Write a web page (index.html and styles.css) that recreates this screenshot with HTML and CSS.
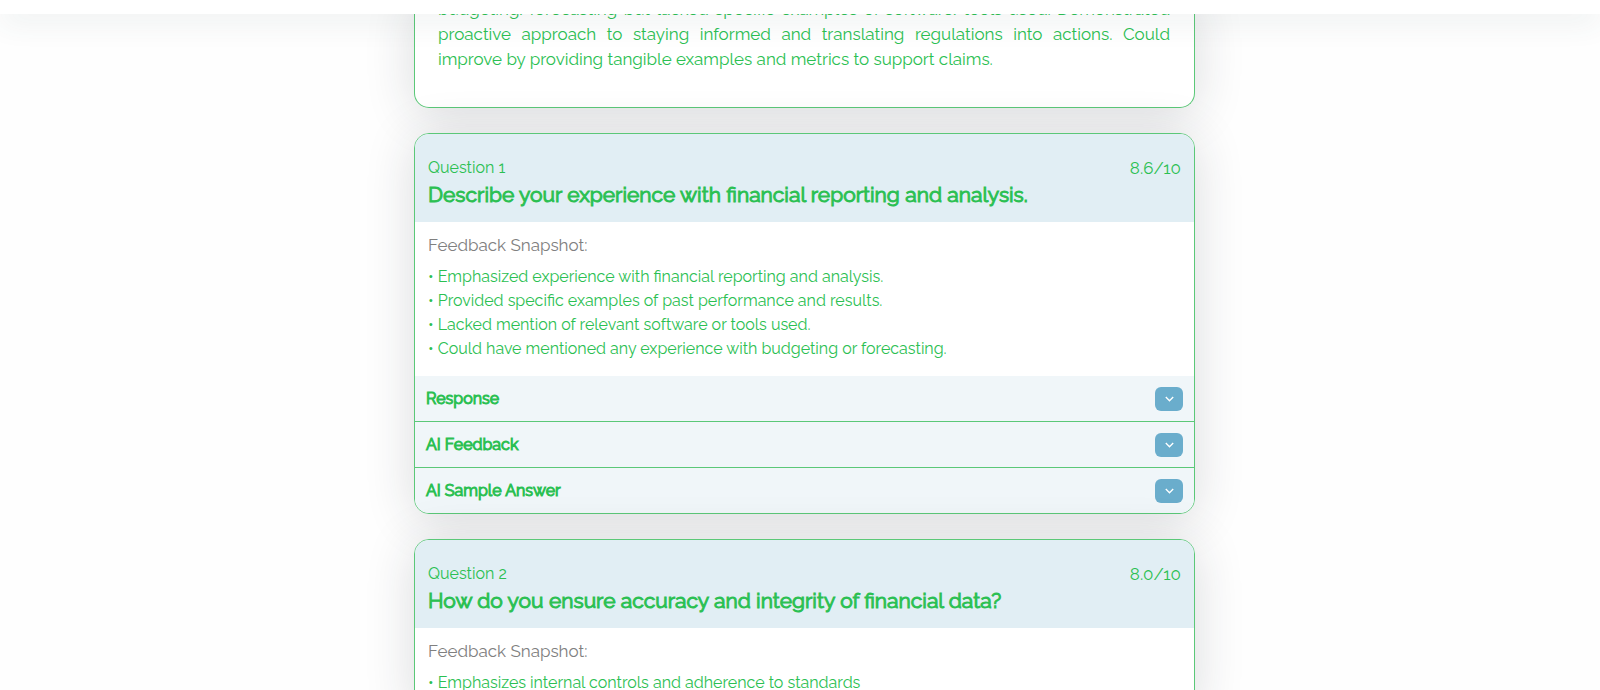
FILE: index.html
```html
<!DOCTYPE html>
<html lang="en">
<head>
<meta charset="utf-8">
<title>Interview feedback</title>
<link rel="stylesheet" href="styles.css">
</head>
<body>
<header class="topbar"></header>
<main class="results">
  <section class="card summary">
    <p class="summary-text">budgeting/forecasting but lacked specific examples of software/tools used. Demonstrated proactive approach to staying informed and translating regulations into actions. Could improve by providing tangible examples and metrics to support claims.</p>
  </section>

  <article class="card">
    <header class="card-head">
      <div class="card-meta"><span class="number">Question 1</span><span class="score">8.6/10</span></div>
      <h2 class="question">Describe your experience with financial reporting and analysis.</h2>
    </header>
    <div class="snapshot">
      <h3 class="snapshot-title">Feedback Snapshot:</h3>
      <ul class="points">
        <li>Emphasized experience with financial reporting and analysis.</li>
        <li>Provided specific examples of past performance and results.</li>
        <li>Lacked mention of relevant software or tools used.</li>
        <li>Could have mentioned any experience with budgeting or forecasting.</li>
      </ul>
    </div>
    <div class="row"><span id="r1">Response</span><button class="toggle" type="button" aria-labelledby="r1"><svg class="chevron" viewBox="0 0 8 5"><path d="M0.7 0.7 4 4 7.3 0.7"/></svg></button></div>
    <div class="row"><span id="r2">AI Feedback</span><button class="toggle" type="button" aria-labelledby="r2"><svg class="chevron" viewBox="0 0 8 5"><path d="M0.7 0.7 4 4 7.3 0.7"/></svg></button></div>
    <div class="row"><span id="r3">AI Sample Answer</span><button class="toggle" type="button" aria-labelledby="r3"><svg class="chevron" viewBox="0 0 8 5"><path d="M0.7 0.7 4 4 7.3 0.7"/></svg></button></div>
  </article>

  <article class="card">
    <header class="card-head">
      <div class="card-meta"><span class="number">Question 2</span><span class="score">8.0/10</span></div>
      <h2 class="question">How do you ensure accuracy and integrity of financial data?</h2>
    </header>
    <div class="snapshot">
      <h3 class="snapshot-title">Feedback Snapshot:</h3>
      <ul class="points">
        <li>Emphasizes internal controls and adherence to standards</li>
      </ul>
    </div>
  </article>
</main>
</body>
</html>
```
FILE: styles.css
```css
* { box-sizing: border-box; }
html { overflow: hidden; }
body {
  margin: 0;
  padding-left: 9px;
  background: #fefefe;
  color: #2bc052;
  font-family: Raleway, Lato, sans-serif;
  font-size: 17px;
}
.topbar {
  position: fixed;
  top: 0;
  left: 0;
  right: 0;
  z-index: 2;
  height: 14px;
  background: #fff;
  box-shadow: 0 6px 30px rgba(47, 79, 79, 0.12);
}
.results {
  display: flex;
  flex-direction: column;
  gap: 25px;
  width: calc(100% - 32px);
  max-width: 781px;
  margin: 0 auto;
}
.card {
  overflow: hidden;
  background: #fff;
  border: 1px solid #5bc878;
  border-radius: 15px;
  box-shadow: 0 5px 50px rgba(30, 40, 50, 0.16);
}
.summary {
  border-top: 0;
  border-radius: 0 0 15px 15px;
  padding: 0 24px 35px 23px;
}
.summary-text {
  margin: -3px 0 0;
  font-size: 17px;
  line-height: 25px;
  text-align: justify;
}
.card-head {
  padding: 22px 13px 13px;
  background: #e1eef4;
}
.card-meta {
  display: flex;
  justify-content: space-between;
  line-height: 24px;
}
.number { font-size: 16px; }
.question {
  margin: 0;
  font-size: 21px;
  font-weight: 400;
  line-height: 29px;
  -webkit-text-stroke: 1px;
}
.snapshot { padding: 9px 13px 15px; }
.snapshot-title {
  margin: 0 0 6px;
  color: #808080;
  font-size: 17px;
  font-weight: 400;
  line-height: 28px;
}
.points {
  margin: 0;
  padding: 0;
  list-style: none;
  font-size: 16px;
  line-height: 24px;
}
.points li::before { content: "• "; }
.row {
  box-sizing: content-box;
  display: flex;
  align-items: center;
  justify-content: space-between;
  min-height: 45px;
  padding: 0 11px;
  background: #f0f6f9;
  font-size: 16px;
  -webkit-text-stroke: 1px;
}
.row + .row { border-top: 1px solid #5bc878; }
.toggle {
  display: grid;
  place-items: center;
  width: 28px;
  height: 24px;
  padding: 0;
  border: 0;
  border-radius: 6px;
  background: #6aadcc;
}
.chevron {
  width: 9px;
  height: 6px;
  fill: none;
  stroke: #fff;
  stroke-width: 1.2;
}
```
